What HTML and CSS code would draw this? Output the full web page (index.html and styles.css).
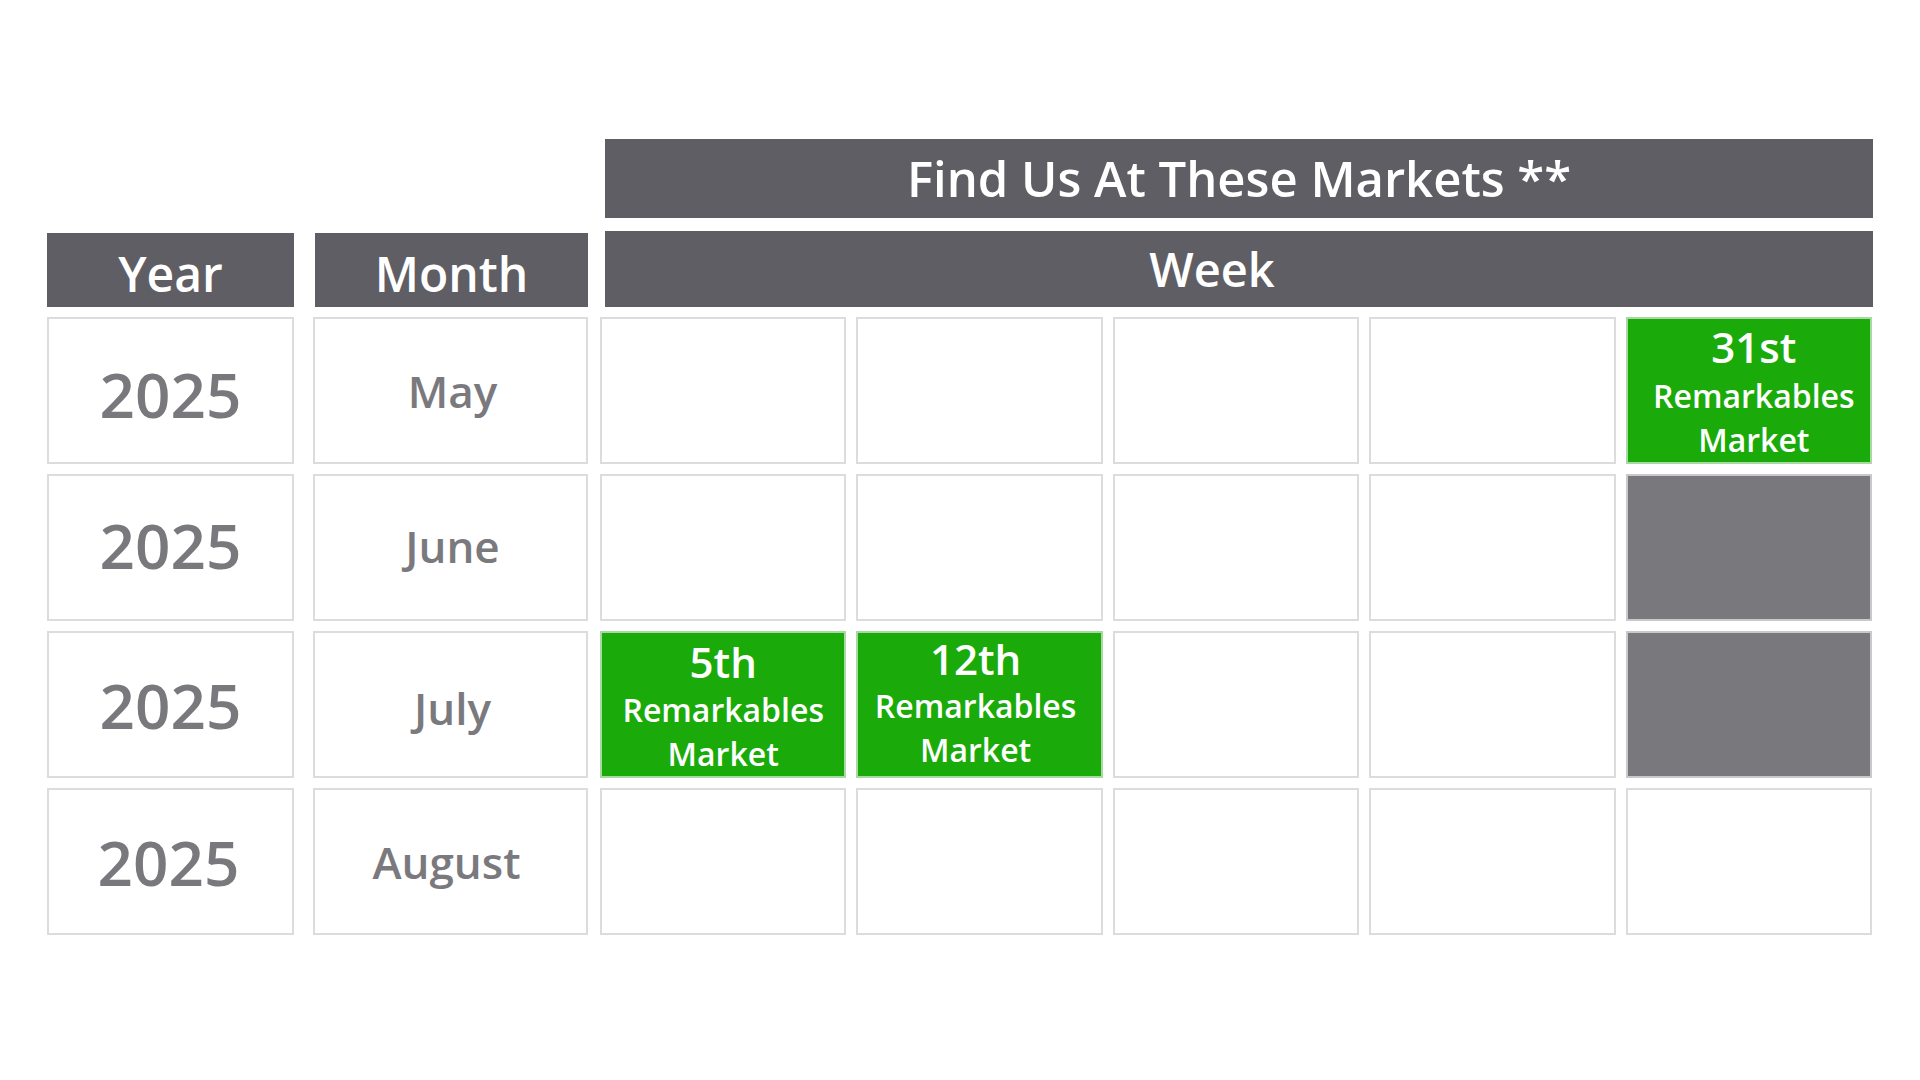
FILE: index.html
```html
<!DOCTYPE html>
<html lang="en">
<head>
<meta charset="utf-8">
<title>Find Us At These Markets</title>
<link rel="stylesheet" href="styles.css">
</head>
<body>
<div class="page">
  <div class="title-bar">Find Us At These Markets **</div>
  <div class="head-row">
    <div class="head head-year">Year</div>
    <div class="head head-month">Month</div>
    <div class="head head-week">Week</div>
  </div>
  <div class="rows">
    <div class="row">
      <div class="cell year year-first">2025</div>
      <div class="cell month">May</div>
      <div class="weeks">
        <div class="cell"></div>
        <div class="cell"></div>
        <div class="cell"></div>
        <div class="cell"></div>
        <div class="cell market market-right">
          <div class="date">31st</div>
          <div class="label">Remarkables</div>
          <div class="label">Market</div>
        </div>
      </div>
    </div>
    <div class="row">
      <div class="cell year year-high">2025</div>
      <div class="cell month month-high">June</div>
      <div class="weeks">
        <div class="cell"></div>
        <div class="cell"></div>
        <div class="cell"></div>
        <div class="cell"></div>
        <div class="cell off"></div>
      </div>
    </div>
    <div class="row">
      <div class="cell year">2025</div>
      <div class="cell month month-low">July</div>
      <div class="weeks">
        <div class="cell market market-low">
          <div class="date">5th</div>
          <div class="label">Remarkables</div>
          <div class="label">Market</div>
        </div>
        <div class="cell market market-high">
          <div class="date">12th</div>
          <div class="label">Remarkables</div>
          <div class="label">Market</div>
        </div>
        <div class="cell"></div>
        <div class="cell"></div>
        <div class="cell off"></div>
      </div>
    </div>
    <div class="row">
      <div class="cell year year-left">2025</div>
      <div class="cell month month-left">August</div>
      <div class="weeks">
        <div class="cell"></div>
        <div class="cell"></div>
        <div class="cell"></div>
        <div class="cell"></div>
        <div class="cell"></div>
      </div>
    </div>
  </div>
</div>
</body>
</html>
```

FILE: styles.css
```css
* {
  box-sizing: border-box;
}

html, body {
  margin: 0;
  padding: 0;
  background: #ffffff;
}

body {
  width: 1920px;
  height: 1080px;
  overflow: hidden;
  font-family: "Open Sans", "Noto Sans", sans-serif;
  font-weight: 600;
}

.page {
  padding-top: 139px;
  padding-left: 47px;
}

.title-bar {
  margin-left: 558px;
  width: 1268px;
  height: 79px;
  background: #5f5e64;
  color: #ffffff;
  font-size: 49px;
  line-height: 1;
  display: flex;
  align-items: center;
  justify-content: center;
}

.head-row {
  margin-top: 13px;
  display: flex;
  align-items: flex-end;
  height: 76px;
}

.head {
  background: #5f5e64;
  color: #ffffff;
  font-size: 48px;
  line-height: 1;
  display: flex;
  align-items: center;
  justify-content: center;
}

.head-year {
  width: 247px;
  height: 74px;
  padding-top: 8px;
}

.head-month {
  margin-left: 21px;
  width: 273px;
  height: 74px;
  padding-top: 8px;
}

.head-week {
  margin-left: 17px;
  width: 1268px;
  height: 76px;
  padding-right: 54px;
  font-size: 47px;
}

.rows {
  margin-top: 10px;
  display: flex;
  flex-direction: column;
  gap: 10px;
}

.row {
  display: flex;
  height: 147px;
}

.cell {
  border: 2px solid #dcdcdc;
  background: #ffffff;
  height: 147px;
}

.year {
  width: 247px;
  color: #79787d;
  font-size: 62px;
  line-height: 1;
  display: flex;
  align-items: center;
  justify-content: center;
}

.year-first {
  padding-top: 6px;
}

.year-high {
  padding-bottom: 6px;
}

.year-left {
  padding-right: 4px;
}

.month {
  margin-left: 19px;
  width: 275px;
  color: #7a797e;
  font-size: 44px;
  line-height: 1;
  display: flex;
  align-items: center;
  justify-content: center;
  padding-left: 4px;
}

.month-high {
  padding-bottom: 3px;
}

.month-low {
  padding-top: 6px;
}

.month-left {
  padding-left: 0;
  padding-right: 8px;
}

.weeks {
  margin-left: 12px;
  width: 1272px;
  display: flex;
  gap: 10px;
}

.weeks .cell {
  flex: 1 1 0;
  min-width: 0;
}

.off {
  background: #79787d;
  border-color: #c9c9cb;
}

.market {
  background: #1aab0a;
  border-color: #a8d9a2;
  color: #ffffff;
  display: flex;
  flex-direction: column;
  align-items: center;
}

.market-right > div {
  padding-left: 10px;
}

.market-low {
  padding-top: 2px;
}

.market-high > div {
  padding-right: 8px;
}

.market-high .date {
  height: 51px;
}

.date {
  font-size: 42px;
  line-height: 1;
  height: 56px;
  display: flex;
  align-items: center;
}

.label {
  font-size: 32px;
  line-height: 44px;
}
```
